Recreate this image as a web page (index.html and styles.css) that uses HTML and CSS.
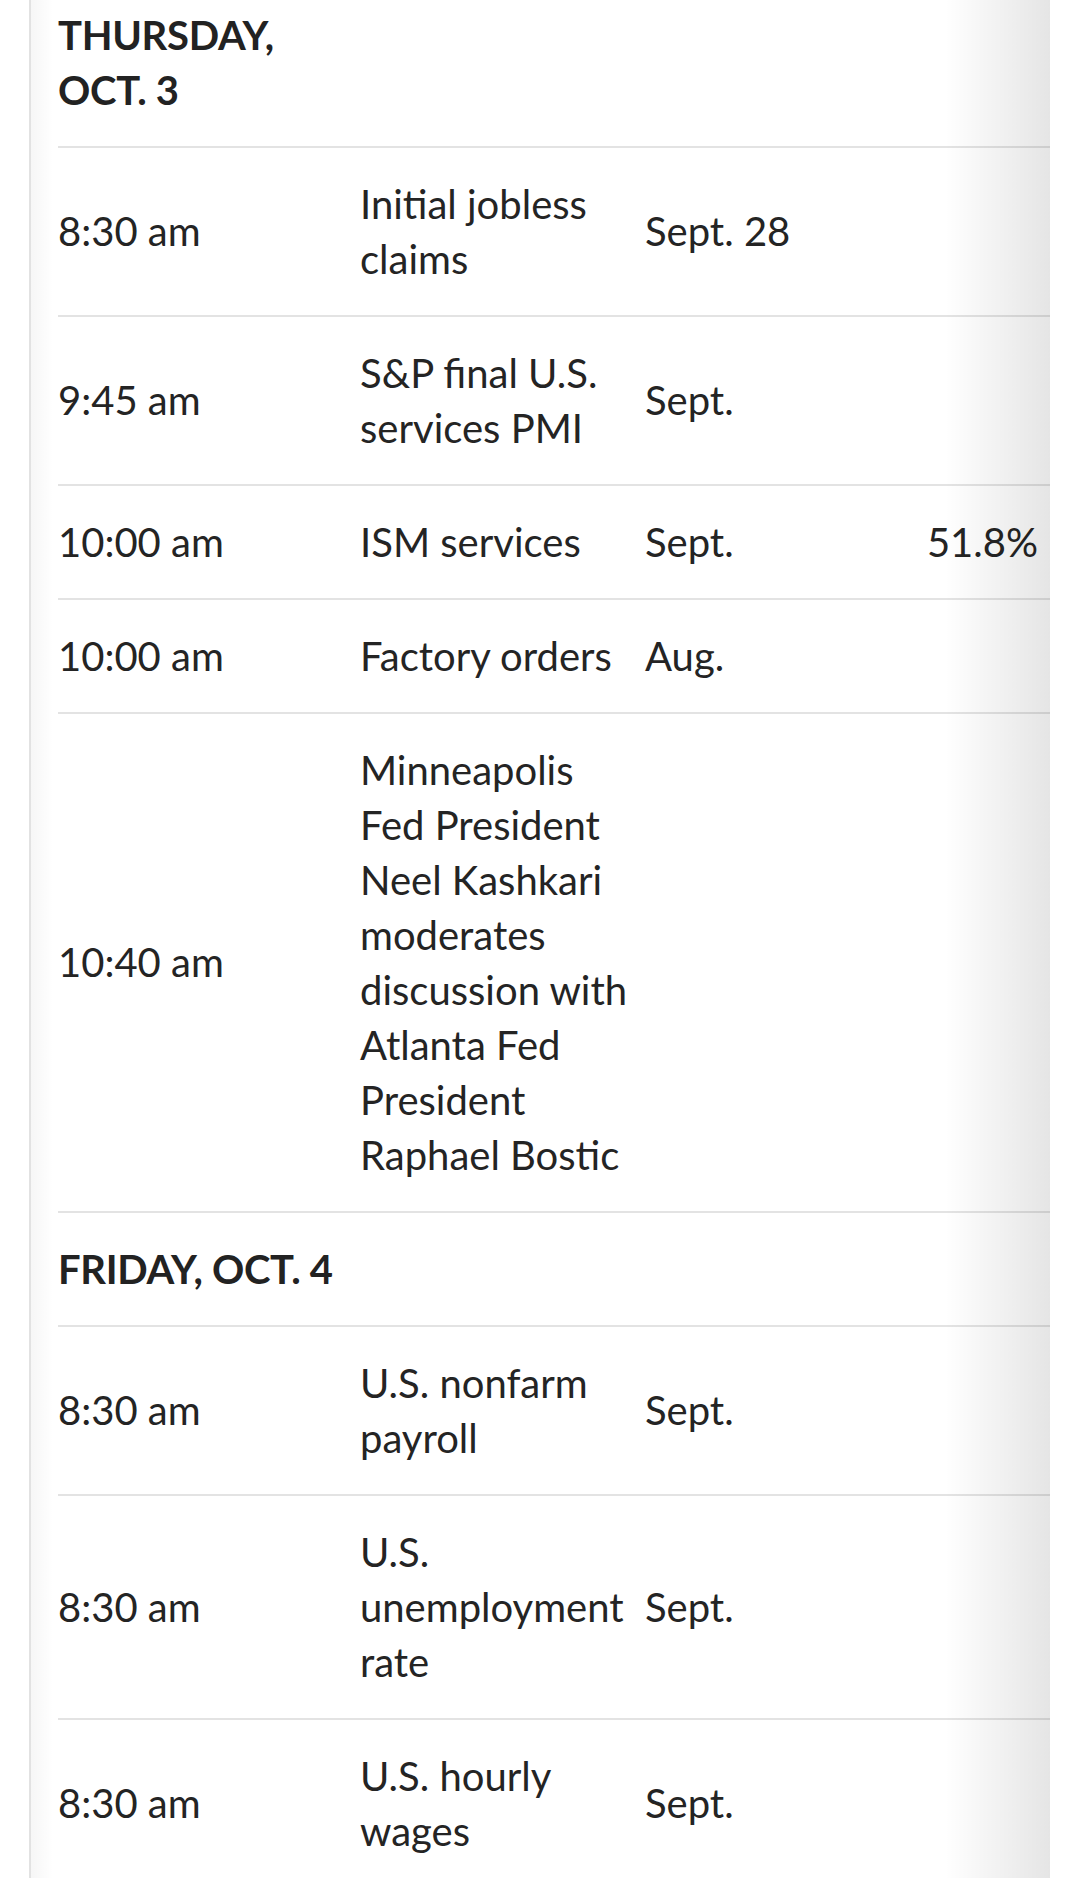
FILE: index.html
```html
<!DOCTYPE html>
<html lang="en">
<head>
<meta charset="utf-8">
<title>Economic calendar</title>
<link rel="stylesheet" href="styles.css">
</head>
<body>
<div class="wrap">
  <div class="table">
    <div class="row head"><div class="day">THURSDAY, OCT.&nbsp;3</div></div>
    <div class="row"><div class="c1">8:30 am</div><div class="c2">Initial jobless claims</div><div class="c3">Sept. 28</div><div class="c4"></div></div>
    <div class="row"><div class="c1">9:45 am</div><div class="c2">S&amp;P final U.S. services PMI</div><div class="c3">Sept.</div><div class="c4"></div></div>
    <div class="row"><div class="c1">10:00 am</div><div class="c2">ISM services</div><div class="c3">Sept.</div><div class="c4">51.8%</div></div>
    <div class="row"><div class="c1">10:00 am</div><div class="c2">Factory orders</div><div class="c3">Aug.</div><div class="c4"></div></div>
    <div class="row"><div class="c1">10:40 am</div><div class="c2">Minneapolis Fed President Neel Kashkari moderates discussion with Atlanta Fed President Raphael Bostic</div><div class="c3"></div><div class="c4"></div></div>
    <div class="row head"><div class="day">FRIDAY, OCT.&nbsp;4</div></div>
    <div class="row"><div class="c1">8:30 am</div><div class="c2">U.S. nonfarm payroll</div><div class="c3">Sept.</div><div class="c4"></div></div>
    <div class="row"><div class="c1">8:30 am</div><div class="c2">U.S. unemployment rate</div><div class="c3">Sept.</div><div class="c4"></div></div>
    <div class="row"><div class="c1">8:30 am</div><div class="c2">U.S. hourly wages</div><div class="c3">Sept.</div><div class="c4"></div></div>
  </div>
</div>
</body>
</html>
```
FILE: styles.css
```css
html, body {
  margin: 0;
  padding: 0;
  background: #ffffff;
}

body {
  font-family: Lato, "Noto Sans", sans-serif;
  color: #242424;
  overflow: hidden;
}

.wrap {
  position: relative;
  margin-top: -21px;
  margin-left: 29px;
  width: 1019px;
  border-left: 2px solid #e2e2e2;
  overflow: hidden;
}

.wrap::before {
  content: "";
  position: absolute;
  top: 0;
  left: 0;
  bottom: 0;
  width: 22px;
  background: linear-gradient(to right, rgba(0, 0, 0, 0.035), rgba(0, 0, 0, 0));
  pointer-events: none;
}

.wrap::after {
  content: "";
  position: absolute;
  top: 0;
  right: 0;
  bottom: 0;
  width: 105px;
  background: linear-gradient(to right, rgba(0, 0, 0, 0), rgba(0, 0, 0, 0.1));
  pointer-events: none;
}

.table {
  padding-left: 27px;
}

.row {
  display: grid;
  grid-template-columns: 302px 285px 1fr 200px;
  align-items: center;
  padding: 28.5px 0;
  border-bottom: 2px solid #e3e3e3;
  font-size: 40px;
  line-height: 55px;
}

.c2 {
  padding-right: 15px;
}

.c4 {
  text-align: right;
  padding-right: 12px;
}

.day {
  font-weight: 700;
  font-size: 40px;
  letter-spacing: -0.3px;
  color: #222222;
}
```
